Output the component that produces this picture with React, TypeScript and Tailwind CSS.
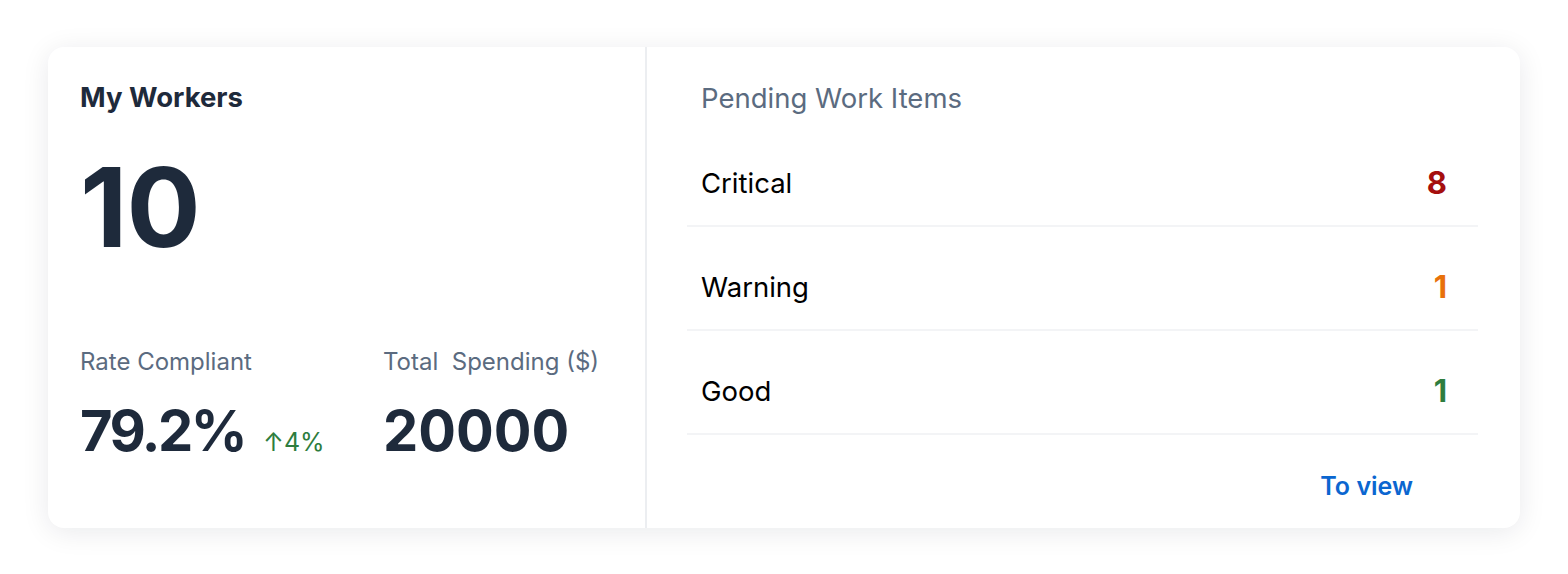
import React from 'react';

const rows = [
  { label: 'Critical', value: 8, color: 'text-[#a50e0e]' },
  { label: 'Warning', value: 1, color: 'text-[#e8710a]' },
  { label: 'Good', value: 1, color: 'text-[#2e7d3e]' },
];

const App: React.FC = () => {
  return (
    <div className="w-[1568px] h-[574px] bg-white px-[48px] pt-[47px] font-['Inter',sans-serif]">
      <div className="flex h-[481px] rounded-2xl bg-white shadow-[0_4px_28px_rgba(15,23,42,0.09)]">
        {/* Left: workers */}
        <div className="w-[599px] border-r-2 border-[#eceef1] pl-8 pt-[34px] flex flex-col">
          <h2 className="text-[27.5px] leading-[32px] font-bold text-[#1e2a3b]">My Workers</h2>
          <div className="mt-[39px] text-[110px] leading-[110px] font-bold text-[#1e2a3b] tracking-[-1px]">10</div>
          <div className="mt-[85px] flex">
            <div className="w-[303px]">
              <div className="text-[24px] leading-[30px] text-[#5b6b80]">Rate Compliant</div>
              <div className="mt-[24px] flex items-baseline h-[60px] leading-[60px]">
                <span className="text-[56px] font-bold text-[#1e2a3b] tracking-[-2.5px]">79.2%</span>
                <span className="ml-[18px] text-[25px] text-[#2e7d3e]">↑4%</span>
              </div>
            </div>
            <div>
              <div className="text-[24px] leading-[30px] text-[#5b6b80] whitespace-pre">Total  Spending ($)</div>
              <div className="mt-[24px] text-[56px] leading-[60px] font-bold text-[#1e2a3b]">20000</div>
            </div>
          </div>
        </div>

        {/* Right: pending items */}
        <div className="flex-1 pl-[40px] pr-[42px] pt-[76px] relative">
          <h3 className="absolute left-[54px] top-[35px] text-[27.5px] leading-[32px] text-[#5b6b80]">Pending Work Items</h3>
          <div className="flex flex-col">
            {rows.map((r) => (
              <div key={r.label} className="flex items-center justify-between h-[104px] pt-[19px] pl-[14px] pr-[31px] border-b-2 border-[#f3f4f6]">
                <span className="text-[27.5px] text-black">{r.label}</span>
                <span className={`text-[31px] font-bold ${r.color}`}>{r.value}</span>
              </div>
            ))}
          </div>
          <div className="flex justify-end pr-[65px] pt-[33px]">
            <button className="text-[25px] font-semibold text-[#0b66d0]">To view</button>
          </div>
        </div>
      </div>
    </div>
  );
};

export default App;
